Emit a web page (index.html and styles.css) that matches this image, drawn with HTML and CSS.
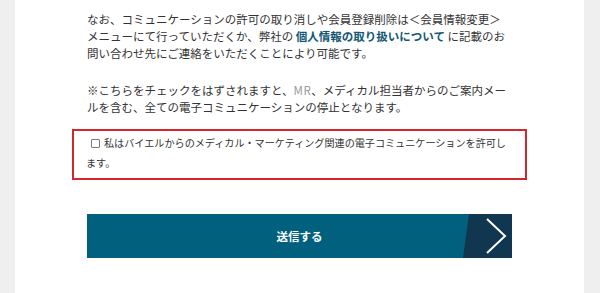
FILE: index.html
```html
<!DOCTYPE html>
<html lang="ja">
<head>
<meta charset="utf-8">
<title>電子コミュニケーションの許可</title>
<link rel="stylesheet" href="styles.css">
</head>
<body>
<div class="panel">
  <div class="inner">
    <div class="notes">
      <p class="note">なお、コミュニケーションの許可の取り消しや会員登録削除は＜会員情報変更＞メニューにて行っていただくか、弊社の <a class="link" href="#">個人情報の取り扱いについて</a> に記載のお問い合わせ先にご連絡をいただくことにより可能です。</p>
      <p class="note">※こちらをチェックをはずされますと、<span class="mr">MR</span>、メディカル担当者からのご案内メー<br>ルを含む、全ての電子コミュニケーションの停止となります。</p>
    </div>
    <label class="consent"><span class="check"></span>私はバイエルからのメディカル・マーケティング関連の電子コミュニケーションを許可します。</label>
    <button class="submit" type="button">
      <span class="submit-label">送信する</span>
      <span class="submit-arrow">
        <svg width="49" height="44" viewBox="0 0 49 44"><polyline points="24,5 42,22 24,39" fill="none" stroke="#ffffff" stroke-width="2"/></svg>
      </span>
    </button>
  </div>
</div>
</body>
</html>
```
FILE: styles.css
```css
html, body {
  margin: 0;
  padding: 0;
}
body {
  background: #efefef;
  font-family: "Noto Sans CJK JP", "Noto Sans", sans-serif;
  color: #333333;
}
.panel {
  margin-left: 15px;
  width: 569px;
  min-height: 293px;
  box-sizing: border-box;
  background: #ffffff;
  padding-top: 11px;
}
.inner {
  padding: 0 57px;
}
.notes {
  display: flex;
  flex-direction: column;
  gap: 20px;
  margin: 0 15px 13px;
}
.note {
  margin: 0;
  font-size: 11.5px;
  line-height: 17px;
  color: #333333;
}
.link {
  color: #145775;
  font-weight: bold;
  text-decoration: none;
}
.mr {
  color: #9a9a9a;
  letter-spacing: 0.5px;
}
.consent {
  display: block;
  border: 2px solid #d6262d;
  padding: 2px 14px 5px 12px;
  font-size: 10.1px;
  line-height: 20px;
  color: #333333;
}
.check {
  display: inline-block;
  box-sizing: border-box;
  width: 9px;
  height: 9px;
  border: 1px solid #7a7a7a;
  border-radius: 1px;
  margin: 0 4px 0 5px;
  vertical-align: -1px;
  background: #ffffff;
}
.submit {
  position: relative;
  display: flex;
  align-items: center;
  justify-content: center;
  width: 425px;
  height: 44px;
  margin: 34px 15px 0;
  padding: 0;
  border: 0;
  background: #00607e;
  color: #ffffff;
  font-family: "Noto Sans CJK JP", "Noto Sans", sans-serif;
  font-size: 11.5px;
  font-weight: bold;
  cursor: pointer;
}
.submit-arrow {
  position: absolute;
  top: 0;
  right: 0;
  width: 49px;
  height: 44px;
  background: #11364f;
  clip-path: polygon(6px 0, 100% 0, 100% 100%, 0 100%);
}
.submit-arrow svg {
  display: block;
}
```
